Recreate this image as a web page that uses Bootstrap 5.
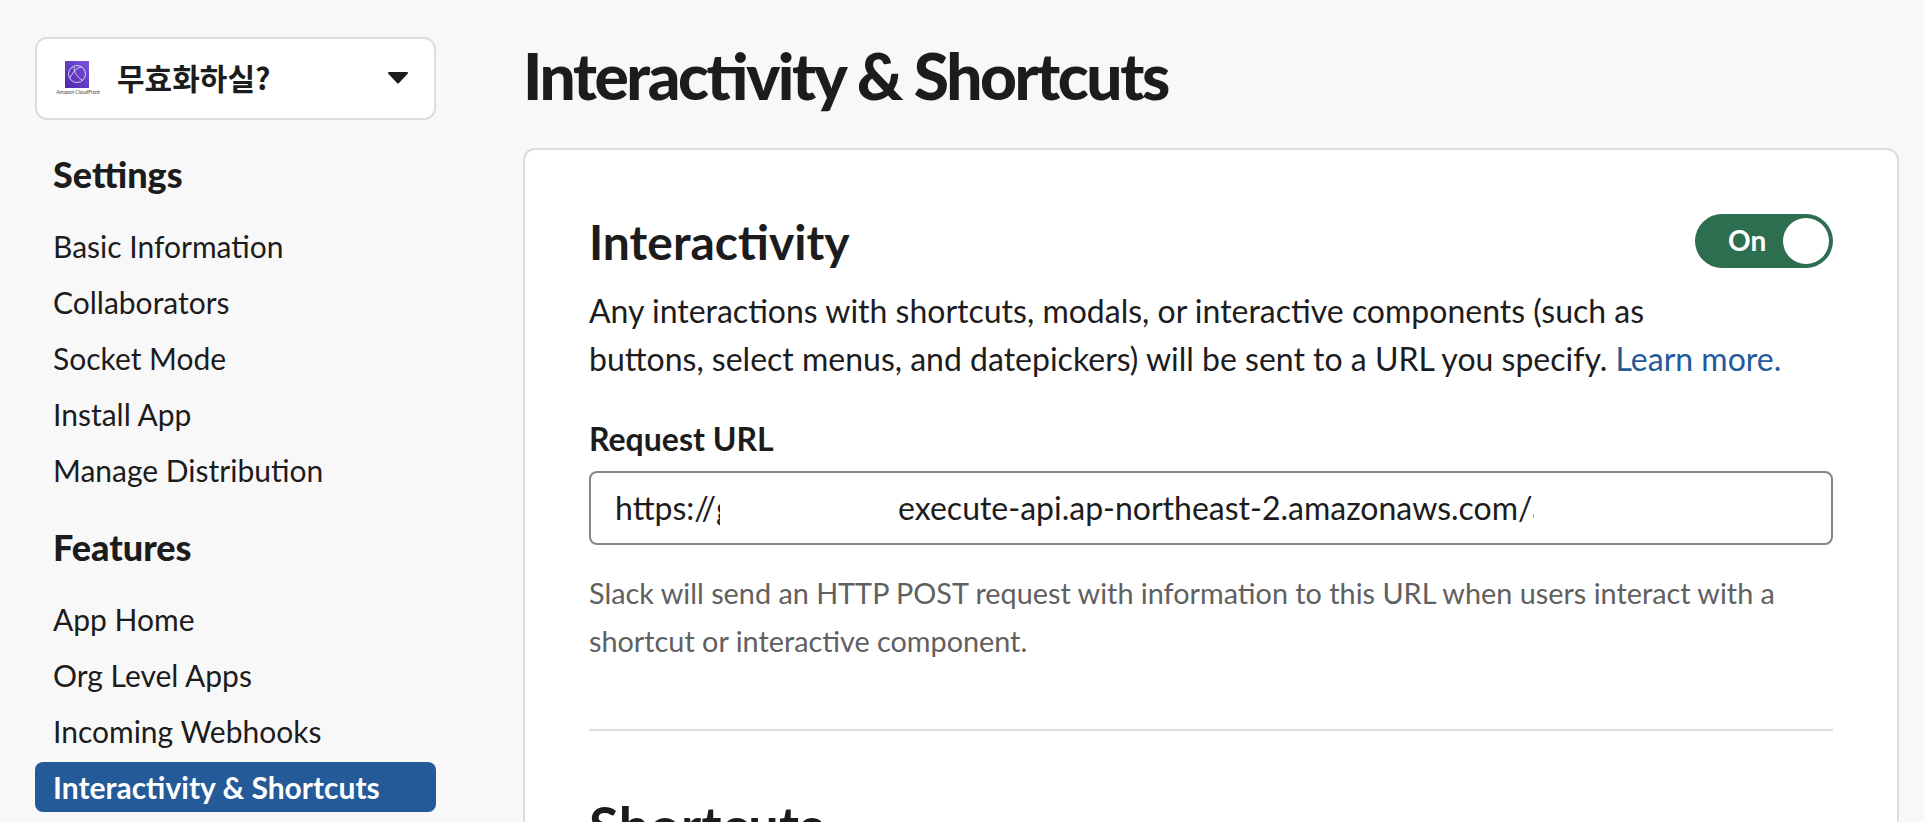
<!doctype html>
<html lang="en"><head><meta charset="utf-8"><title>Interactivity & Shortcuts</title>
<link href="https://cdn.jsdelivr.net/npm/bootstrap@5.3.0/dist/css/bootstrap.min.css" rel="stylesheet">
<style>
html,body{height:822px;overflow:hidden}
body{background:#f8f8f8;color:#1d1c1d;font-family:Lato,"Noto Sans CJK KR",sans-serif;font-size:30px;font-feature-settings:"liga" 1;text-rendering:optimizeLegibility}
.shell{height:822px;overflow:hidden}
.side{width:523px;flex:none;padding:37px 87px 0 35px}
.app-picker{height:83px;border:2px solid #ddd;border-radius:12px;background:#fff;padding:0 26px 2px 19px}
.app-logo{width:44px;flex:none;margin-right:17px}
.logo-cap{font-size:5px;line-height:6px;white-space:nowrap;color:#444;text-align:center;display:block}
.app-name{font-family:"Noto Sans CJK KR",sans-serif;font-size:30px;font-weight:700;flex:1}
.caret-down{width:20px;height:13px}
.sect{font-size:36px;font-weight:900;line-height:44px;padding-left:18px;margin:0}
.sect-a{margin-top:32px;margin-bottom:25px}
.sect-b{margin-top:30px;margin-bottom:25px}
.side-link{display:block;height:50px;line-height:50px;margin-bottom:6px;padding-left:18px;color:#1d1c1d;text-decoration:none;border-radius:8px;white-space:nowrap}
.side-link.on{background:#235a97;color:#fff;font-weight:700}
.main-col{flex:1;padding-right:25px;min-width:0}
.page-title{font-size:64px;font-weight:900;line-height:80px;margin:36px 0 32px;letter-spacing:-2.4px}
.panel{background:#fff;border:2px solid #ddd;border-radius:12px;padding:64px 64px 0;height:900px}
.panel-h{font-size:48px;font-weight:700;line-height:56px;margin:0}
.sw{width:138px;height:54px;border-radius:27px;background:#2e6e50;padding:0 4px 0 33px;color:#fff;font-size:28px;font-weight:700}
.sw-txt{margin-bottom:2px}
.sw-knob{width:46px;height:46px;border-radius:50%;background:#fff}
.desc{font-size:32px;line-height:48px;margin:17px 0 38px}
.desc a{color:#235a97;text-decoration:none}
.fld-label{font-size:32px;font-weight:700;line-height:36px;margin-bottom:14px;display:block}
.url-box{height:74px;border:2px solid #868686;border-radius:8px;padding:0 24px;font-size:32px;white-space:nowrap;color:#1d1c1d;background:#fff;line-height:70px}
.clip-a{display:inline-block;width:4px;overflow:hidden;vertical-align:bottom}
.gap-b{display:inline-block;width:178px}
.clip-c{display:inline-block;width:1px;overflow:hidden;vertical-align:bottom}
.hint{font-size:28.8px;line-height:48px;color:#616061;margin:24px 0 0}
.rule{border:0;border-top:2px solid #ddd;opacity:1;margin:64px 0 0}
.sub-h{margin-top:67px;font-size:54px;letter-spacing:.4px}
</style></head><body>
<div class="shell d-flex">
<nav class="side">
 <div class="app-picker d-flex align-items-center">
  <div class="app-logo"><svg width="44" height="28" viewBox="0 0 44 28" class="d-block"><defs><linearGradient id="g" x1="0" y1="1" x2="1" y2="0"><stop offset="0" stop-color="#4d27a8"/><stop offset="1" stop-color="#7a52e0"/></linearGradient></defs><rect x="9" width="24" height="27" fill="url(#g)"/><circle cx="21" cy="13" r="8.5" fill="none" stroke="#d9cff5" stroke-width="1"/><path d="M14 17c4-8 8-11 12-11M18 6c0 5 3 10 8 13" fill="none" stroke="#d9cff5" stroke-width="1"/></svg><span class="logo-cap">Amazon CloudFront</span></div>
  <span class="app-name">무효화하실?</span>
  <svg class="caret-down" viewBox="0 0 20 13"><path d="M1 1h18a1 1 0 0 1 .7 1.7L11 12a1.4 1.4 0 0 1-2 0L.3 2.7A1 1 0 0 1 1 1z" fill="#1d1c1d"/></svg>
 </div>
 <h2 class="sect sect-a">Settings</h2>
 <a class="side-link" href="#">Basic Information</a>
 <a class="side-link" href="#">Collaborators</a>
 <a class="side-link" href="#">Socket Mode</a>
 <a class="side-link" href="#">Install App</a>
 <a class="side-link" href="#">Manage Distribution</a>
 <h2 class="sect sect-b">Features</h2>
 <a class="side-link" href="#">App Home</a>
 <a class="side-link" href="#">Org Level Apps</a>
 <a class="side-link" href="#">Incoming Webhooks</a>
 <a class="side-link on" href="#">Interactivity &amp; Shortcuts</a>
</nav>
<main class="main-col">
 <h1 class="page-title">Interactivity &amp; Shortcuts</h1>
 <section class="panel">
  <div class="d-flex justify-content-between align-items-start">
   <h2 class="panel-h">Interactivity</h2>
   <div class="sw d-flex align-items-center justify-content-between"><span class="sw-txt">On</span><span class="sw-knob"></span></div>
  </div>
  <p class="desc">Any interactions with shortcuts, modals, or interactive components (such as<br>buttons, select menus, and datepickers) will be sent to a URL you specify. <a href="#">Learn more.</a></p>
  <label class="fld-label">Request URL</label>
  <div class="url-box">https://<span class="clip-a">g</span><span class="gap-b"></span>execute-api.ap-northeast-2.amazonaws.com/<span class="clip-c">a</span></div>
  <p class="hint">Slack will send an HTTP POST request with information to this URL when users interact with a<br>shortcut or interactive component.</p>
  <hr class="rule">
  <h2 class="panel-h sub-h">Shortcuts</h2>
 </section>
</main>
</div>
</body></html>
